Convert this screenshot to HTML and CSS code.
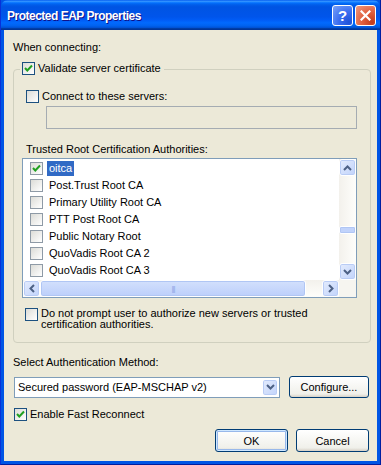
FILE: index.html
```html
<!DOCTYPE html>
<html lang="en">

<head>
    <meta charset="UTF-8">
    <title>Protected EAP Properties</title>
    <link rel="stylesheet" href="styles.css">
</head>

<body>
    <div class="window">
        <div class="titlebar">
            <span class="title">Protected EAP Properties</span>
            <div class="caption-buttons">
                <span class="cap-btn help">?</span>
                <span class="cap-btn close">
                    <svg width="11" height="11" viewBox="0 0 11 11">
                        <path d="M1.5 1.5 L9.5 9.5 M9.5 1.5 L1.5 9.5" stroke="#fff" stroke-width="2.2" stroke-linecap="square" />
                    </svg>
                </span>
            </div>
        </div>

        <div class="client">
            <div class="label">When connecting:</div>

            <!-- Server validation group -->
            <div class="group">
                <label class="legend">
                    <span class="check checked">
                        <svg width="11" height="11" viewBox="0 0 11 11"><path d="M2 5 L4.3 7.5 L9 2.5" fill="none" stroke="#21a121" stroke-width="2" /></svg>
                    </span>
                    Validate server certificate
                </label>

                <label class="row servers"><span class="check"></span>Connect to these servers:</label>
                <div class="textbox"></div>

                <div class="label trusted">Trusted Root Certification Authorities:</div>

                <div class="listbox">
                    <div class="items">
                        <div class="item">
                            <span class="check">
                                <svg width="11" height="11" viewBox="0 0 11 11"><path d="M2 5 L4.3 7.5 L9 2.5" fill="none" stroke="#21a121" stroke-width="2" /></svg>
                            </span>
                            <span class="item-text selected">oitca</span>
                        </div>
                        <div class="item"><span class="check"></span><span class="item-text">Post.Trust Root CA</span></div>
                        <div class="item"><span class="check"></span><span class="item-text">Primary Utility Root CA</span></div>
                        <div class="item"><span class="check"></span><span class="item-text">PTT Post Root CA</span></div>
                        <div class="item"><span class="check"></span><span class="item-text">Public Notary Root</span></div>
                        <div class="item"><span class="check"></span><span class="item-text">QuoVadis Root CA 2</span></div>
                        <div class="item"><span class="check"></span><span class="item-text">QuoVadis Root CA 3</span></div>
                    </div>

                    <div class="vscroll">
                        <span class="sb-btn">
                            <svg width="9" height="6" viewBox="0 0 9 6"><path d="M1 5 L4.5 1.5 L8 5" fill="none" stroke="#4d6185" stroke-width="2" /></svg>
                        </span>
                        <span class="v-thumb"></span>
                        <span class="sb-fill"></span>
                        <span class="sb-btn">
                            <svg width="9" height="6" viewBox="0 0 9 6"><path d="M1 1 L4.5 4.5 L8 1" fill="none" stroke="#4d6185" stroke-width="2" /></svg>
                        </span>
                    </div>

                    <div class="hscroll">
                        <span class="sb-btn">
                            <svg width="6" height="9" viewBox="0 0 6 9"><path d="M5 1 L1.5 4.5 L5 8" fill="none" stroke="#4d6185" stroke-width="2" /></svg>
                        </span>
                        <span class="h-thumb"><span class="grip">|||</span></span>
                        <span class="sb-fill"></span>
                        <span class="sb-btn">
                            <svg width="6" height="9" viewBox="0 0 6 9"><path d="M1 1 L4.5 4.5 L1 8" fill="none" stroke="#4d6185" stroke-width="2" /></svg>
                        </span>
                    </div>
                    <div class="corner"></div>
                </div>

                <label class="row prompt">
                    <span class="check"></span>
                    <span>Do not prompt user to authorize new servers or trusted<br>certification authorities.</span>
                </label>
            </div>

            <div class="label method">Select Authentication Method:</div>
            <div class="method-row">
                <div class="combo">
                    <span class="combo-text">Secured password (EAP-MSCHAP v2)</span>
                    <span class="combo-btn">
                        <svg width="9" height="6" viewBox="0 0 9 6"><path d="M1 1 L4.5 4.5 L8 1" fill="none" stroke="#4d6185" stroke-width="2" /></svg>
                    </span>
                </div>
                <button class="btn configure">Configure...</button>
            </div>

            <label class="row fast">
                <span class="check">
                    <svg width="11" height="11" viewBox="0 0 11 11"><path d="M2 5 L4.3 7.5 L9 2.5" fill="none" stroke="#21a121" stroke-width="2" /></svg>
                </span>
                Enable Fast Reconnect
            </label>

            <div class="actions">
                <button class="btn default">OK</button>
                <button class="btn">Cancel</button>
            </div>
        </div>
    </div>
</body>

</html>
```

FILE: styles.css
```css
* {
    margin: 0;
    padding: 0;
    box-sizing: border-box;
    font-family: 'Liberation Sans', Arial, sans-serif;
}

body {
    width: 381px;
    height: 465px;
    background: #0054e3;
    overflow: hidden;
}

.window {
    width: 381px;
    height: 465px;
    display: flex;
    flex-direction: column;
    background: #0055e5;
    border-left: 1px solid #0831d9;
    border-right: 1px solid #001ea0;
    border-bottom: 1px solid #001ea0;
}

/* Title bar */

.titlebar {
    height: 30px;
    flex: none;
    display: flex;
    align-items: center;
    justify-content: space-between;
    padding: 0 4px 0 6px;
    background: linear-gradient(to bottom, #0058ee 0%, #3593ff 4%, #288eff 6%, #127dff 8%, #036ffc 10%, #0262ee 14%, #0057e5 20%, #0054e3 24%, #0055eb 56%, #005bf5 66%, #026afe 76%, #0062ef 86%, #0052d6 92%, #0040ab 94%, #003092 100%);
    border-radius: 7px 7px 0 0;
}

.title {
    color: white;
    font-size: 12px;
    font-weight: bold;
    letter-spacing: -0.5px;
    margin-top: 1px;
    text-shadow: 1px 1px #0f1089;
}

.caption-buttons {
    display: flex;
    gap: 2px;
    margin-top: 1px;
}

.cap-btn {
    width: 21px;
    height: 21px;
    border: 1px solid white;
    border-radius: 3px;
    display: flex;
    align-items: center;
    justify-content: center;
    color: white;
    font-size: 15px;
    font-weight: bold;
}

.help {
    background: radial-gradient(circle at 85% 85%, #1f52d8 0%, #3a6df0 45%, #7aa2f8 100%);
}

.close {
    background: radial-gradient(circle at 85% 85%, #c33c1c 0%, #e0603f 45%, #f19a80 100%);
}

/* Client area */

.client {
    flex: 1;
    margin: 0 3px 3px 3px;
    padding: 11px 8px 0 9px;
    background: #ece9d8;
    font-size: 11px;
    color: black;
    display: flex;
    flex-direction: column;
}

.label {
    line-height: 13px;
}

.group {
    width: 358px;
    margin-top: 15px;
    padding: 0 0 12px 0;
    border: 1px solid #d0d0bf;
    border-radius: 4px;
}

.legend {
    display: flex;
    width: fit-content;
    align-items: center;
    gap: 3px;
    height: 13px;
    margin: -8px 0 0 6px;
    padding: 0 3px 0 2px;
    background: #ece9d8;
    line-height: 13px;
}

.row {
    display: flex;
    align-items: center;
    gap: 3px;
    line-height: 13px;
}

.check {
    width: 13px;
    height: 13px;
    flex: none;
    display: flex;
    align-items: center;
    justify-content: center;
    border: 1px solid #1c5180;
    background: linear-gradient(135deg, #dcdcd7, #ffffff);
}

.servers {
    margin: 15px 0 0 12px;
}

.textbox {
    width: 311px;
    height: 23px;
    margin: 3px 0 0 32px;
    border: 1px solid #a5acb2;
    background: #ece9d8;
}

.trusted {
    margin: 14px 0 0 12px;
}

/* Certificate list */

.listbox {
    width: 335px;
    height: 140px;
    margin: 2px 0 0 8px;
    border: 1px solid #7f9db9;
    background: white;
    display: grid;
    grid-template-columns: 1fr 17px;
    grid-template-rows: 1fr 17px;
}

.items {
    padding: 1px 0 0 7px;
    overflow: hidden;
}

.item {
    height: 17px;
    display: flex;
    align-items: center;
    gap: 4px;
}

.items .check {
    border-color: #8e9aa6;
}

.item-text {
    padding: 0 2px;
    line-height: 15px;
}

.item-text.selected {
    background: #316ac5;
    color: white;
}

.vscroll {
    display: flex;
    flex-direction: column;
    background: linear-gradient(to right, #f3f1ec, #fefefb);
}

.hscroll {
    display: flex;
    background: linear-gradient(to bottom, #f3f1ec, #fefefb);
}

.corner {
    background: #f6f5f0;
}

.sb-btn {
    width: 17px;
    height: 17px;
    flex: none;
    display: flex;
    align-items: center;
    justify-content: center;
    border: 1px solid #fff;
    border-radius: 3px;
    background: linear-gradient(135deg, #e4ecfd, #c1d3fb);
    box-shadow: inset 0 0 0 1px #b9ccf5;
}

.sb-fill {
    flex: 1;
}

.v-thumb {
    height: 8px;
    margin-top: 50px;
    border-radius: 2px;
    border: 1px solid #fff;
    background: #c1d3fb;
    box-shadow: inset 0 0 0 1px #b0c6f4;
}

.h-thumb {
    width: 266px;
    flex: none;
    display: flex;
    align-items: center;
    justify-content: center;
    border: 1px solid #fff;
    border-radius: 3px;
    background: linear-gradient(to bottom, #d3e0fc, #bccffb);
    box-shadow: inset 0 0 0 1px #b0c6f4;
}

.grip {
    font-size: 8px;
    color: #8fa9e6;
    letter-spacing: -1px;
}

.prompt {
    margin: 10px 0 0 11px;
    align-items: flex-start;
    line-height: 11px;
}

/* Authentication method */

.method {
    margin-top: 13px;
}

.method-row {
    display: flex;
    align-items: center;
    justify-content: space-between;
    margin-top: 7px;
}

.combo {
    width: 266px;
    height: 21px;
    margin-left: 1px;
    display: flex;
    align-items: center;
    justify-content: space-between;
    border: 1px solid #7f9db9;
    background: white;
    padding: 0 1px 0 3px;
}

.combo-btn {
    width: 16px;
    height: 17px;
    display: flex;
    align-items: center;
    justify-content: center;
    border: 1px solid #fff;
    border-radius: 3px;
    background: linear-gradient(135deg, #e4ecfd, #c1d3fb);
    box-shadow: inset 0 0 0 1px #b9ccf5;
}

.btn {
    height: 23px;
    border: 1px solid #003c74;
    border-radius: 3px;
    background: linear-gradient(to bottom, #ffffff, #f0f0ea 85%, #d6d0c5);
    font-size: 11px;
    color: black;
}

.configure {
    width: 80px;
    height: 22px;
}

.fast {
    margin: 10px 0 0 1px;
}

.actions {
    display: flex;
    justify-content: flex-end;
    gap: 8px;
    margin-top: 8px;
}

.actions .btn {
    width: 73px;
}

.btn.default {
    box-shadow: inset 0 0 0 1px #cee7ff, inset 0 0 0 2px #98b8ea;
}
```
